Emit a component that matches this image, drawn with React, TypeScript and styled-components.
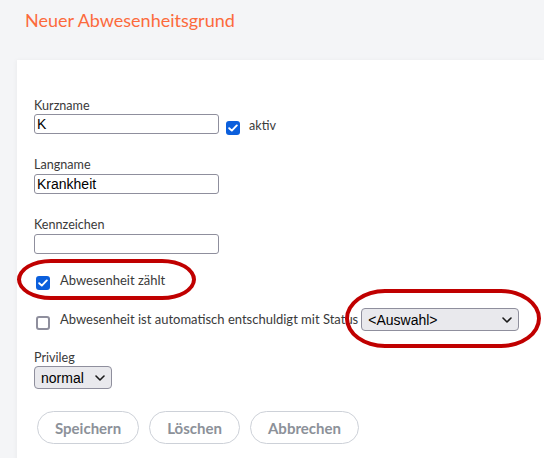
import styled, { createGlobalStyle } from "styled-components";

const Global = createGlobalStyle`
  body {
    margin: 0;
    background: #f4f5f7;
    font-family: Lato, "Open Sans", sans-serif;
  }
`;

function Check({ checked }: { checked?: boolean }) {
  return (
    <Box $checked={checked}>
      {checked && (
        <svg width="10" height="8" viewBox="0 0 10 8">
          <path d="M1.2 4.2 L3.8 6.6 L8.8 1.4" fill="none" stroke="#fff" strokeWidth="1.9" strokeLinecap="round" strokeLinejoin="round" />
        </svg>
      )}
    </Box>
  );
}

function Dropdown({ width, value }: { width: number; value: string }) {
  return (
    <SelectWrap>
      <Select $width={width} defaultValue={value}>
        <option>{value}</option>
      </Select>
      <Chevron width="10" height="6" viewBox="0 0 10 6">
        <path d="M1 1 L5 5 L9 1" fill="none" stroke="#1b1b1b" strokeWidth="1.6" strokeLinecap="round" strokeLinejoin="round" />
      </Chevron>
    </SelectWrap>
  );
}

export default function App() {
  return (
    <Page>
      <Global />
      <Header>
        <Title>Neuer Abwesenheitsgrund</Title>
      </Header>
      <Card>
        <Field>
          <Label>Kurzname</Label>
          <InlineRow>
            <Input defaultValue="K" />
            <Check checked />
            <Small>aktiv</Small>
          </InlineRow>
        </Field>
        <Field>
          <Label>Langname</Label>
          <Input defaultValue="Krankheit" />
        </Field>
        <Field>
          <Label>Kennzeichen</Label>
          <Input defaultValue="" />
        </Field>
        <CheckRow>
          <Check checked />
          <Text>Abwesenheit zählt</Text>
        </CheckRow>
        <CheckRow $gap={18}>
          <Check />
          <Text>Abwesenheit ist automatisch entschuldigt mit Status</Text>
          <Dropdown width={158} value="<Auswahl>" />
        </CheckRow>
        <Field $top={19}>
          <Label>Privileg</Label>
          <Dropdown width={78} value="normal" />
        </Field>
        <Buttons>
          <Button>Speichern</Button>
          <Button>Löschen</Button>
          <Button>Abbrechen</Button>
        </Buttons>
        <Oval $left={0} $top={199} $w={179} $h={41} $r={34} />
        <Oval $left={328} $top={229} $w={196} $h={59} $r={40} />
      </Card>
    </Page>
  );
}

const Page = styled.div`
  min-height: 458px;
  display: flex;
  flex-direction: column;
`;

const Header = styled.div`
  height: 60px;
  padding: 9px 0 0 25px;
  box-sizing: border-box;
`;

const Title = styled.h1`
  margin: 0;
  font-size: 18px;
  line-height: 22px;
  font-weight: 400;
  color: #fc6a3c;
`;

const Card = styled.div`
  position: relative;
  flex: 1;
  margin-left: 17px;
  background: #fff;
  padding: 38px 17px 20px;
  box-shadow: -1px 0 4px rgba(0, 0, 0, 0.04);
`;

const Field = styled.div<{ $top?: number }>`
  margin-top: ${(p) => p.$top ?? 0}px;
  margin-bottom: 23px;
`;

const Label = styled.div`
  font-size: 12.6px;
  line-height: 16px;
  color: #3a3a3a;
`;

const InlineRow = styled.div`
  display: flex;
  align-items: center;
  height: 20px;
`;

const Input = styled.input`
  box-sizing: border-box;
  width: 185px;
  height: 20px;
  margin: 0;
  padding: 0 2px;
  border: 1px solid #8f8f9d;
  border-radius: 3px;
  font-family: "Liberation Sans", Arial, sans-serif;
  font-size: 14px;
  color: #000;
  outline: none;
`;

const Box = styled.span<{ $checked?: boolean }>`
  box-sizing: border-box;
  flex: none;
  display: inline-flex;
  align-items: center;
  justify-content: center;
  width: 14px;
  height: 14px;
  margin-top: 6px;
  border-radius: 3px;
  background: ${(p) => (p.$checked ? "#0b5fdc" : "#fff")};
  border: ${(p) => (p.$checked ? "none" : "2px solid #8f8f9d")};
  ${InlineRow} & {
    margin-left: 7px;
    margin-top: 7px;
  }
`;

const Small = styled.span`
  margin-left: 9px;
  margin-top: 3px;
  font-size: 12.6px;
  color: #3a3a3a;
`;

const CheckRow = styled.div<{ $gap?: number }>`
  display: flex;
  align-items: center;
  margin-top: ${(p) => p.$gap ?? -7}px;
  padding-left: 2px;
  min-height: 20px;
`;

const Text = styled.span`
  margin-left: 10px;
  font-size: 13px;
  line-height: 15px;
  color: #3a3a3a;
  white-space: nowrap;
`;

const SelectWrap = styled.span`
  position: relative;
  display: inline-flex;
  margin-left: 3px;
  ${Field} & {
    margin-left: 0;
  }
`;

const Select = styled.select<{ $width: number }>`
  appearance: none;
  box-sizing: border-box;
  width: ${(p) => p.$width}px;
  height: 23px;
  margin: 0;
  padding: 0 22px 0 6px;
  border: 1px solid #8f8f9d;
  border-radius: 4px;
  background: #e9e9ed;
  font-family: "Liberation Sans", Arial, sans-serif;
  font-size: 14px;
  color: #000;
  outline: none;
`;

const Chevron = styled.svg`
  position: absolute;
  right: 7px;
  top: 9px;
  pointer-events: none;
`;

const Buttons = styled.div`
  display: flex;
  gap: 10px;
  margin-top: -1px;
  padding-left: 3px;
`;

const Button = styled.button`
  height: 33px;
  padding: 0 17px;
  border: 1px solid #cdd1d8;
  border-radius: 17px;
  background: #fff;
  font-family: Lato, sans-serif;
  font-weight: 700;
  font-size: 15px;
  color: #8c9199;
`;

const Oval = styled.div<{ $left: number; $top: number; $w: number; $h: number; $r: number }>`
  position: absolute;
  left: ${(p) => p.$left}px;
  top: ${(p) => p.$top}px;
  width: ${(p) => p.$w}px;
  height: ${(p) => p.$h}px;
  box-sizing: border-box;
  border: 4px solid #c00000;
  border-radius: ${(p) => p.$r}px / 50%;
  pointer-events: none;
`;
